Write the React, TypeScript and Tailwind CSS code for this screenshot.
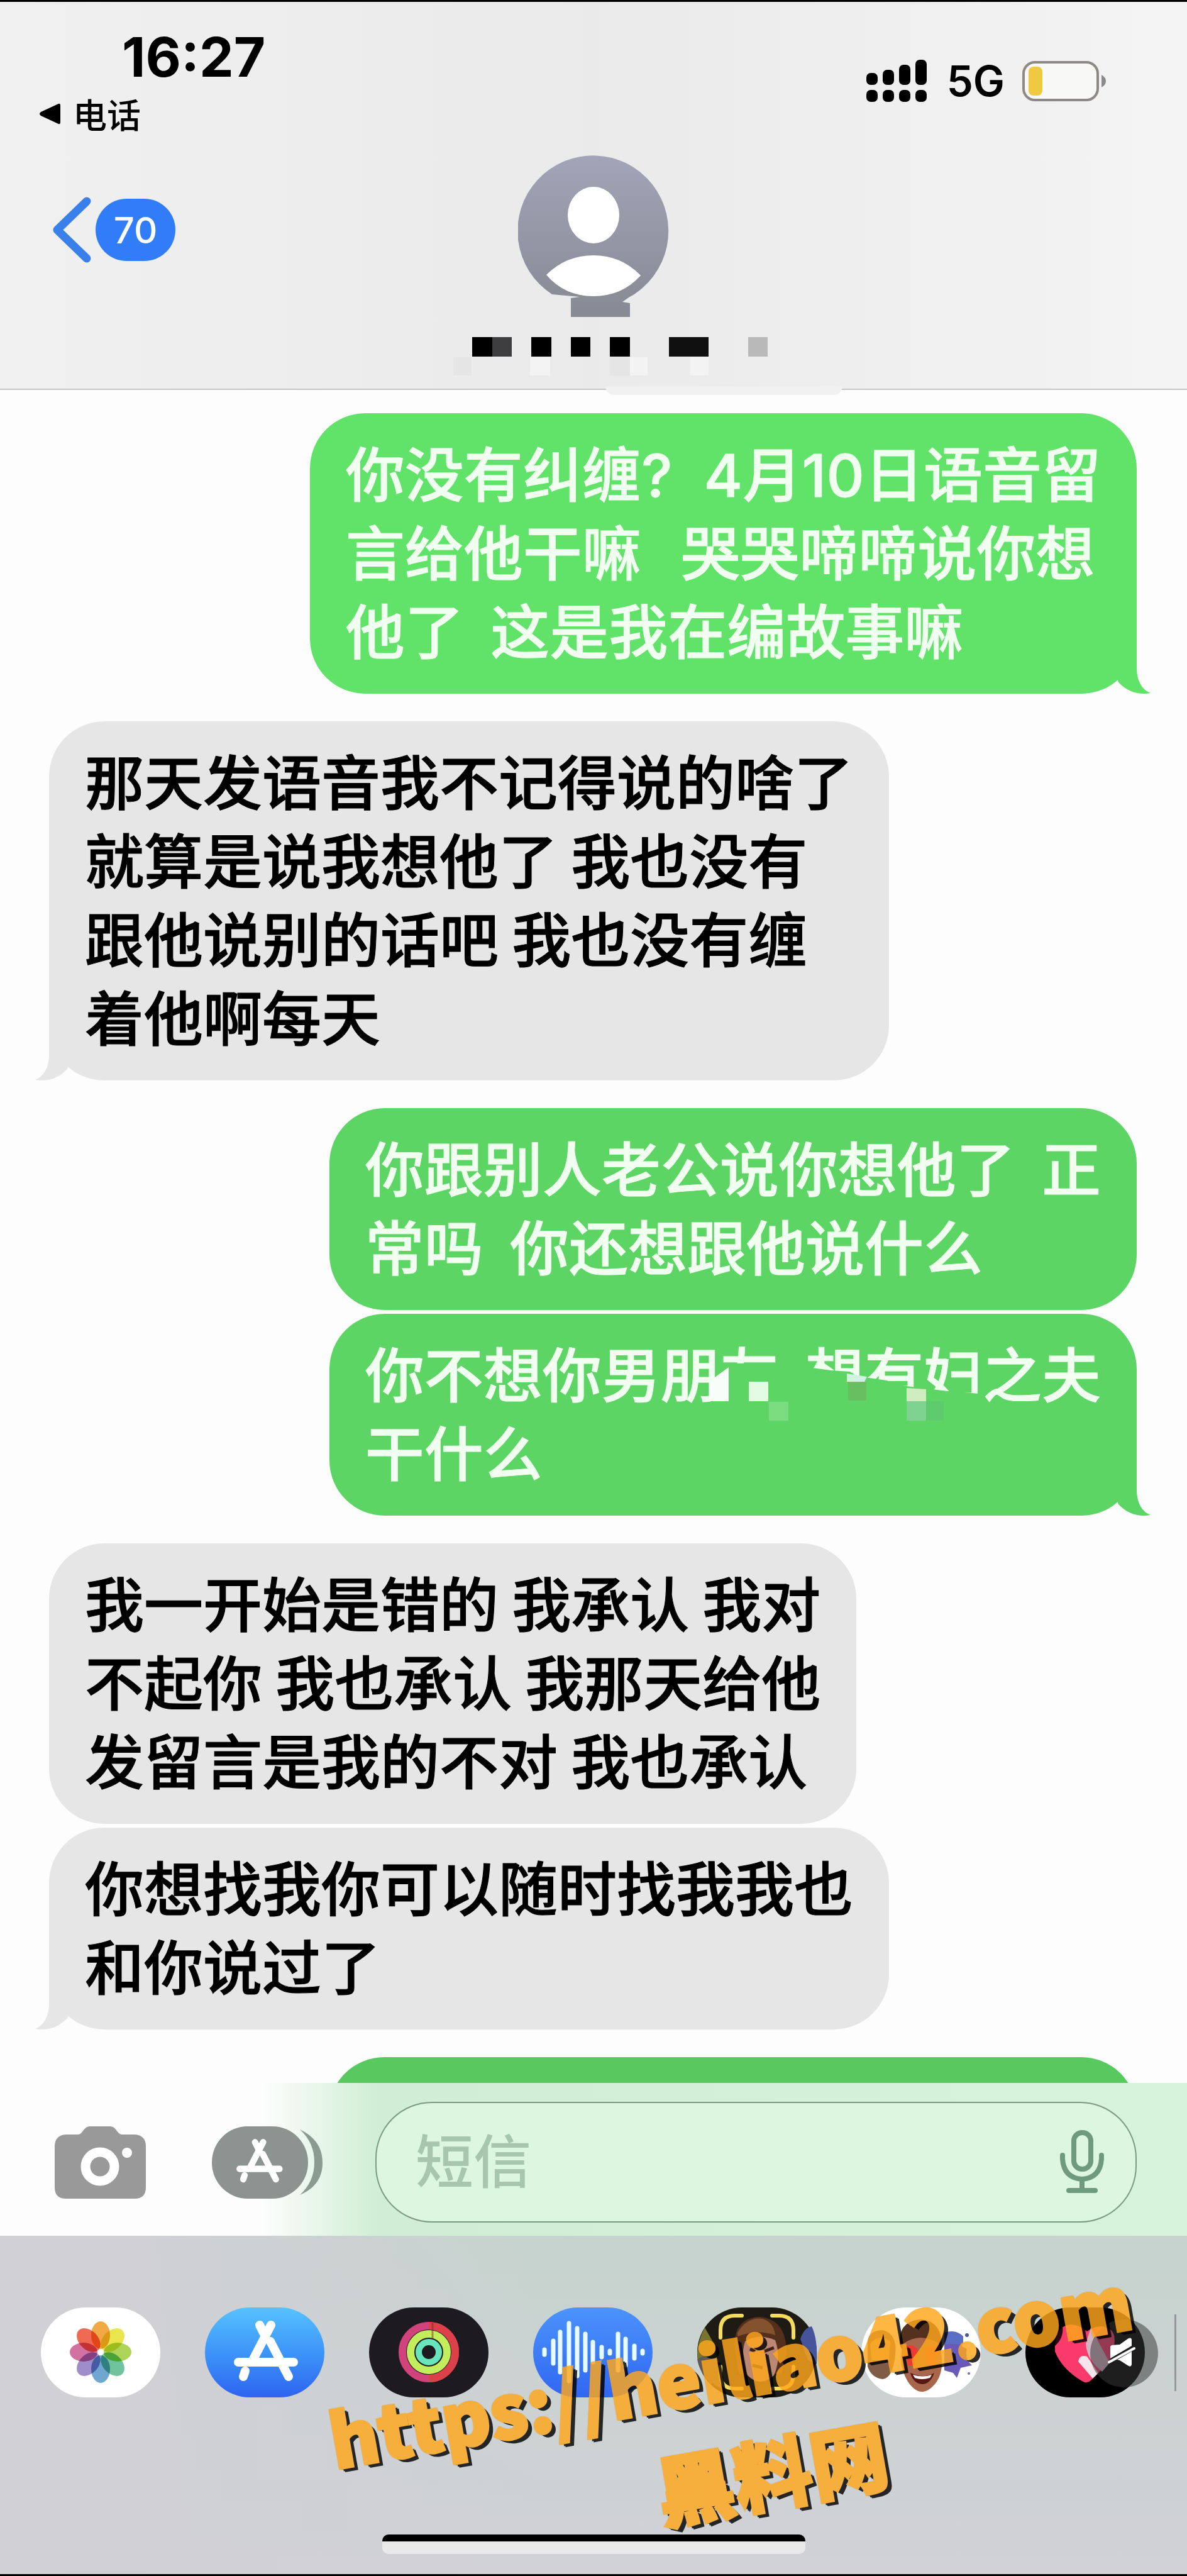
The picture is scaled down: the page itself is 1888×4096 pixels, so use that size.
import React from 'react';

interface BubbleProps {
  lines: string[];
  mine?: boolean;
  tail?: boolean;
  color: string;
  children?: React.ReactNode;
}

const FONT = "font-['Noto_Sans_CJK_SC',sans-serif]";

// Latin runs inside a Chinese message use the UI typeface
const renderLine = (line: string) =>
  line.split(/([\d?][\d? ]*)/).map((part, i) =>
    i % 2 ? <span key={i} className="font-['Inter',sans-serif] leading-[90px]">{part}</span> : part
  );

const Bubble: React.FC<BubbleProps> = ({ lines, mine = false, tail = false, color, children }) => (
  <div className={`relative rounded-[88px] px-[57px] pt-[30px] pb-[41px] ${color} ${mine ? 'self-end' : 'self-start'}`}>
    {tail && (
      <svg
        viewBox="0 0 60 100"
        className={`absolute bottom-0 w-[60px] h-[100px] fill-current ${mine ? '-right-[22px]' : '-left-[22px] -scale-x-100'}`}
      >
        <path d="M38 0V58C38 78 45 93 60 99Q30 104 9 82L0 58Z" />
      </svg>
    )}
    <p
      className={`relative whitespace-pre text-[94px] leading-[125px] font-medium [-webkit-text-stroke:1px] ${
        mine ? 'text-[#f1fff1]' : 'text-black'
      }`}
    >
      {lines.map((line, i) => (
        <span key={i} className="block">{renderLine(line)}</span>
      ))}
    </p>
    {children}
  </div>
);

// Mosaic painted over part of a message
const Mosaic = () => (
  <svg viewBox="1120 2120 480 150" className="absolute left-[597px] top-[31px] w-[480px] h-[150px]">
    <path
      d="M1129 2200L1158 2168H1236L1291 2175L1321 2179L1351 2181L1361 2188L1409 2195L1434 2203L1449 2205L1506 2212L1556 2216V2250H1129Z"
      fill="#5cd564"
    />
    <path d="M1128 2200L1136 2190L1158 2174V2228H1128Z" fill="#f7fdf9" />
    <path d="M1190 2197H1221V2228H1190Z" fill="#e4fbe3" />
    <path d="M1222 2229H1253V2259H1222Z" fill="#7bdc80" />
    <path d="M1346 2184L1378 2189L1374 2197H1346Z" fill="#cff3dd" />
    <path d="M1348 2198H1377V2227H1348Z" fill="#67bf5f" />
    <path d="M1441 2207L1472 2209V2228H1441Z" fill="#cfebc0" />
    <path d="M1441 2228H1472V2259H1441Z" fill="#7fd391" />
    <path d="M1472 2228H1500V2259H1472Z" fill="#5dcb6c" />
  </svg>
);

const StoreGlyph = () => (
  <g fill="none" stroke="#fff" strokeWidth="14" strokeLinecap="round">
    <path d="M105 28L76 84M64 101L61 110" />
    <path d="M87 28L94 42" />
    <path d="M104 54L133 110" />
    <path d="M53 87H141" />
  </g>
);

const PETALS = ['#f0a030', '#e6e23a', '#a5cf47', '#5fbd92', '#5f9dcc', '#9580c4', '#cf6296', '#ee5a40'];

const PhotosIcon = () => (
  <g transform="translate(95 71)">
    {PETALS.map((c, i) => (
      <ellipse key={c} cy="-27" rx="15" ry="22" fill={c} opacity="0.9" transform={`rotate(${i * 45})`} className="mix-blend-multiply" />
    ))}
    <circle r="4" fill="#fff" />
  </g>
);

const RingsIcon = () => (
  <g fill="none">
    <circle cx="95" cy="71" r="42" stroke="#d0437c" strokeWidth="12" />
    <path d="M95 29A42 42 0 0 1 95 113" stroke="#dc4048" strokeWidth="12" />
    <circle cx="95" cy="71" r="29" stroke="#c2ee5c" strokeWidth="12" />
    <circle cx="95" cy="71" r="16" stroke="#68e6bb" strokeWidth="10" />
    <path d="M101 24V50" stroke="#7c2430" strokeWidth="3" opacity="0.5" />
  </g>
);

const WAVE = [
  [18, 8], [32, 22], [43, 36], [57, 50], [70, 42], [83, 33], [95, 20],
  [109, 12], [122, 6], [135, 33], [147, 25], [161, 14], [174, 6],
];

const WaveIcon = () => (
  <g stroke="#e8fbff" strokeWidth="7" strokeLinecap="round">
    {WAVE.map(([x, h]) => (
      <path key={x} d={`M${x} ${75 - h}V${67 + h}`} />
    ))}
  </g>
);

const MemojiCameraIcon = () => (
  <g>
    <path d="M0 72Q2 50 12 32L28 60L34 100L22 122Q2 100 0 72Z" fill="#7a7430" />
    <path d="M0 82Q18 72 32 82L40 130Q4 112 0 82Z" fill="#5e5a56" />
    <path d="M164 50Q170 32 182 30Q192 50 190 90L176 84Z" fill="#46549c" />
    <path d="M60 66Q56 18 98 15Q142 18 142 72L134 106H66Z" fill="#54301c" />
    <path d="M64 40Q80 14 104 18Q122 24 124 44Q96 34 64 46Z" fill="#85522f" />
    <path d="M76 54Q96 40 124 52Q134 80 122 108Q100 128 80 108Q68 80 76 54Z" fill="#bd8873" />
    <path d="M84 66L92 70M106 70L122 64M88 92L104 96" stroke="#3b221b" strokeWidth="5" />
    <path
      d="M37 48V36Q37 13 60 13H71M119 13H130Q153 13 153 36V48M37 94V106Q37 129 60 129H71M119 129H130Q153 129 153 106V94"
      fill="none"
      stroke="#f5dc5c"
      strokeWidth="6"
      strokeLinecap="round"
    />
  </g>
);

const MemojiStickerIcon = () => (
  <g>
    <path d="M10 62Q8 36 34 36Q58 42 54 76Q50 112 34 114Q16 112 10 94Z" fill="#7f5b48" />
    <path d="M14 58Q28 40 46 54L44 84H16Z" fill="#d8a45c" />
    <path d="M132 42Q148 34 162 46L160 62L168 66Q164 82 176 92L158 96L152 112L146 104L132 100Z" fill="#6959b8" />
    <path d="M132 40Q150 34 162 46V58H132Z" fill="#5a6fc4" />
    <circle cx="168" cy="44" r="3" fill="#4a5a96" />
    <circle cx="171" cy="105" r="2" fill="#7a6ab0" />
    <path d="M62 62Q56 24 92 19Q130 20 128 66L118 76H70Z" fill="#54301f" />
    <path d="M66 58Q94 38 124 58Q134 96 120 118Q96 150 74 118Q58 92 66 58Z" fill="#a8664c" />
    <path d="M70 62Q82 56 90 68L86 92H74ZM100 66Q112 56 122 66L118 90H104Z" fill="#ee3a34" />
    <path d="M78 104Q100 114 116 104Q110 122 96 122Q82 120 78 104Z" fill="#5a1610" />
    <path d="M82 107Q98 112 112 107L109 112Q96 116 85 112Z" fill="#fff" />
  </g>
);

const HeartIcon = () => (
  <g>
    <path d="M47 70Q46 44 58 32Q76 20 98 38Q122 22 138 38Q148 52 132 88L104 116Q98 122 90 117Q58 98 47 70Z" fill="#fb3a6c" />
    <path d="M84 86Q86 74 98 78L116 104L107 113Z" fill="#f6e4ec" />
    <path d="M96 58L104 32L134 88L122 102Q98 84 96 58Z" fill="#d3b4c2" />
    <circle cx="157" cy="73" r="54" fill="#393939" opacity="0.53" />
    <path
      d="M137 60L150 59L164 49Q169 47 169 52V61L135 81V62ZM146 83L169 70V91Q168 95 164 93L150 84Z"
      fill="#fff"
    />
    <path d="M133 87L173 65" stroke="#fff" strokeWidth="4" strokeLinecap="round" />
  </g>
);

const APPS = [
  { name: '照片', bg: 'bg-white', icon: <PhotosIcon /> },
  { name: 'App Store', bg: 'bg-linear-to-b from-[#57c2ff] to-[#2f63f0]', icon: <StoreGlyph /> },
  { name: '健身', bg: 'bg-[#1d1b20]', icon: <RingsIcon /> },
  { name: '音频', bg: 'bg-linear-to-b from-[#4c93fb] to-[#3166f2]', icon: <WaveIcon /> },
  { name: '拟我表情', bg: 'bg-[#1d1b14]', icon: <MemojiCameraIcon /> },
  { name: '贴纸', bg: 'bg-white', icon: <MemojiStickerIcon /> },
  { name: 'Digital Touch', bg: 'bg-black', icon: <HeartIcon /> },
];

const SIGNAL = [
  [0, 21], [26, 16], [52, 8], [78, 0],
];

const StatusBar = () => (
  <div className="flex justify-between pt-[38px] pl-[62px] pr-[128px]">
    <div>
      <div className="pl-[132px] font-['Inter',sans-serif] text-[87px] leading-[100px] font-bold">16:27</div>
      <a href="#phone" className="mt-[5px] flex h-[70px] items-center gap-[20px] text-[54px] leading-[70px] font-medium">
        <svg viewBox="0 0 34 34" className="w-[34px] h-[34px]">
          <path d="M31 1Q34 0 34 4V30Q34 34 31 33L3 20Q-1 17 3 14Z" />
        </svg>
        电话
      </a>
    </div>
    <div className="mt-[54px] flex h-[68px] items-center">
      <svg viewBox="0 0 96 68" className="w-[96px] h-[68px]">
        {SIGNAL.map(([x, y]) => (
          <g key={x}>
            <rect x={x} y={y} width="18" height={40 - y} rx="7" />
            <rect x={x} y="48" width="18" height="19" rx="7" />
          </g>
        ))}
      </svg>
      <span className="ml-[32px] font-['Inter',sans-serif] text-[67px] leading-[68px] font-semibold">5G</span>
      <svg viewBox="0 0 134 64" className="ml-[28px] w-[134px] h-[64px]">
        <rect x="2" y="2" width="118" height="60" rx="18" fill="#f8f8f6" stroke="#8d8a86" strokeWidth="4" />
        <rect x="10" y="9" width="22" height="46" rx="8" fill="#efc93f" />
        <path d="M126 22Q133 26 133 32T126 42Z" fill="#8b8b8b" />
      </svg>
    </div>
  </div>
);

const Header = () => (
  <header className="relative border-t-[3px] border-b-2 border-t-black border-b-[#c6c6c6] bg-linear-to-r from-[#f0f0f0] via-[#eaeaea] to-[#f4f4f4]">
    <StatusBar />
    <div className="grid grid-cols-3 items-start pt-[29px] pb-[20px]">
      <button className="mt-[68px] ml-[84px] flex items-center gap-[7px] justify-self-start">
        <svg viewBox="0 0 61 105" className="w-[61px] h-[105px]" fill="none" stroke="#3a80ea" strokeWidth="13" strokeLinecap="round" strokeLinejoin="round">
          <path d="M54 7L7 52.500L54 98" />
        </svg>
        <span className="flex h-[99px] w-[127px] items-center justify-center rounded-full bg-[#317cf8] font-['Inter',sans-serif] text-[58px] leading-[60px] font-medium text-white">
          70
        </span>
      </button>
      <div className="flex flex-col items-center justify-self-center">
        <svg viewBox="824 245 240 260" className="w-[240px] h-[260px]">
          <defs>
            <linearGradient id="avatar" x1="0" y1="0" x2="0" y2="1">
              <stop offset="0" stopColor="#a3a4b8" />
              <stop offset="1" stopColor="#868a93" />
            </linearGradient>
          </defs>
          <path d="M878 468A120 120 0 1 1 1000 473L990 480L1002 482V504H908V474L922 472Z" fill="url(#avatar)" />
          <ellipse cx="944" cy="342" rx="41" ry="45" fill="#fff" />
          <path d="M869 437Q900 406 944 406T1019 438Q990 471 944 471T869 437Z" fill="#fff" />
        </svg>
        <svg viewBox="667 536 554 62" className="mt-[31px] w-[554px] h-[62px]" aria-label="联系人">
          <path d="M721 568H750V597H721ZM970 568H1002V597H970Z" fill="#e5e5e5" />
          <path d="M843 568H875V597H843ZM1002 568H1030V597H1002ZM1098 568H1127V597H1098Z" fill="#f3f3f3" />
          <path d="M751 536H783V567H751ZM845 536H877V567H845ZM908 536H939V567H908ZM970 536H1002V567H970Z" fill="#000" />
          <path d="M783 536H814V567H783Z" fill="#3e3e40" />
          <path d="M1064 536H1127V567H1064Z" fill="#101010" />
          <path d="M1190 536H1221V567H1190Z" fill="#b9b9b9" />
        </svg>
      </div>
    </div>
    <div className="absolute -bottom-[10px] left-[51%] h-[14px] w-[20%] rounded-b-[14px] bg-[#f1f1f1]" />
  </header>
);

const Composer = () => (
  <div className="flex items-center bg-linear-to-r from-[#fdfdfd] from-[22%] via-[#cfeed3] via-[32%] to-[#d8f3dc] pt-[30px] pr-[80px] pb-[21px] pl-[87px]">
    <button aria-label="相机">
      <svg viewBox="0 0 145 115" className="w-[145px] h-[115px]">
        <path
          d="M18 13H38Q42 12 46 6Q50 0 56 0H88Q94 0 98 6Q102 12 106 13H127Q145 14 145 32V97Q145 115 127 115H18Q0 115 0 97V32Q0 14 18 13Z"
          fill="#999"
        />
        <circle cx="72" cy="64" r="23" fill="none" stroke="#fff" strokeWidth="15" />
        <circle cx="115" cy="42" r="8" fill="#fff" />
      </svg>
    </button>
    <button aria-label="App Store" className="ml-[105px]">
      <svg viewBox="0 0 177 115" className="w-[177px] h-[115px]">
        <rect width="153" height="115" rx="57" fill="#8c9390" />
        <path d="M140 5Q176 22 176 58T140 109Q163 88 163 57T140 5Z" fill="#8c9b90" />
        <g transform="translate(6 5) scale(0.72)">
          <StoreGlyph />
        </g>
      </svg>
    </button>
    <label className="ml-[83px] flex h-[192px] min-w-0 flex-1 items-center rounded-[90px] border-2 border-[#7b9b82] bg-[#dcf6e0] pr-[50px] pl-[62px]">
      <input
        type="text"
        aria-label="短信"
        placeholder="短信"
        className="h-[150px] min-w-0 flex-1 bg-transparent pb-[16px] text-[92px] font-medium outline-none placeholder:text-[#a8c6ad]"
      />
      <svg viewBox="0 0 70 102" className="w-[70px] h-[102px]" fill="none" stroke="#709a7e" strokeWidth="8" strokeLinecap="round">
        <rect x="22" y="4" width="27" height="58" rx="13" />
        <path d="M4 40V46Q6 76 35 78Q64 76 66 46V40M35 78V96M14 96H56" />
      </svg>
    </label>
  </div>
);

const Dock = () => (
  <footer className="relative flex flex-col border-b-[3px] border-black bg-linear-to-b from-[#c6d3ce] to-[#d1d1d6] pb-[32px]">
    <div className="absolute inset-0 bg-linear-to-r from-[#d0d0d5] from-[12%] to-transparent to-[45%]" />
    <div className="relative flex items-center gap-[71px] pt-[114px] pl-[65px]">
      {APPS.map(app => (
        <button key={app.name} aria-label={app.name} className={`h-[143px] w-[190px] shrink-0 rounded-full ${app.bg}`}>
          <svg viewBox="0 0 190 143" className="w-[190px] h-[143px] overflow-visible">
            {app.icon}
          </svg>
        </button>
      ))}
      <span className="-ml-[24px] h-[122px] w-[3px] shrink-0 bg-[#96999b]" />
    </div>
    <div className="relative mt-[218px] h-[31px] w-[673px] self-center rounded-[10px] border-t-[11px] border-black bg-[#e9e9e9]" />
    <div className="absolute top-[128px] left-[529px] flex origin-center -rotate-10 flex-col items-center leading-[160px] font-black whitespace-nowrap text-[#ffa71b] opacity-[0.82] [-webkit-text-stroke:4px_#ffa71b] [text-shadow:0_0_3px_#000,2px_2px_0_#000,5px_5px_0_#000,7px_7px_0_#000]">
      <span className="text-[118px]">https://heiliao42.com</span>
      <span className="mt-[12px] pl-[74px] text-[124px]">黑料网</span>
    </div>
  </footer>
);

const App: React.FC = () => (
  <div lang="zh-CN" className={`flex min-h-screen flex-col overflow-hidden bg-[#fdfdfd] text-black ${FONT}`}>
    <Header />
    <main className="flex flex-col gap-[44px] pt-[37px] pr-[80px] pl-[78px]">
      <Bubble mine tail color="bg-[#61e36a] text-[#61e36a]" lines={['你没有纠缠?  4月10日语音留', '言给他干嘛   哭哭啼啼说你想', '他了  这是我在编故事嘛']} />
      <Bubble tail color="bg-[#e6e6e6] text-[#e6e6e6]" lines={['那天发语音我不记得说的啥了', '就算是说我想他了 我也没有', '跟他说别的话吧 我也没有缠', '着他啊每天']} />
      <div className="flex flex-col gap-[6px]">
        <Bubble mine color="bg-[#5cd564]" lines={['你跟别人老公说你想他了  正', '常吗  你还想跟他说什么']} />
        <Bubble mine tail color="bg-[#5cd564] text-[#5cd564]" lines={['你不想你男朋友  想有妇之夫', '干什么']}>
          <Mosaic />
        </Bubble>
      </div>
      <div className="flex flex-col gap-[6px]">
        <Bubble color="bg-[#e6e6e6]" lines={['我一开始是错的 我承认 我对', '不起你 我也承认 我那天给他', '发留言是我的不对 我也承认']} />
        <Bubble tail color="bg-[#e6e6e6] text-[#e6e6e6]" lines={['你想找我你可以随时找我我也', '和你说过了']} />
      </div>
      <div className="h-[41px] w-[1285px] self-end overflow-hidden">
        <div className="h-[196px] rounded-[88px] bg-[#58c95e]" />
      </div>
    </main>
    <Composer />
    <Dock />
  </div>
);

export default App;
